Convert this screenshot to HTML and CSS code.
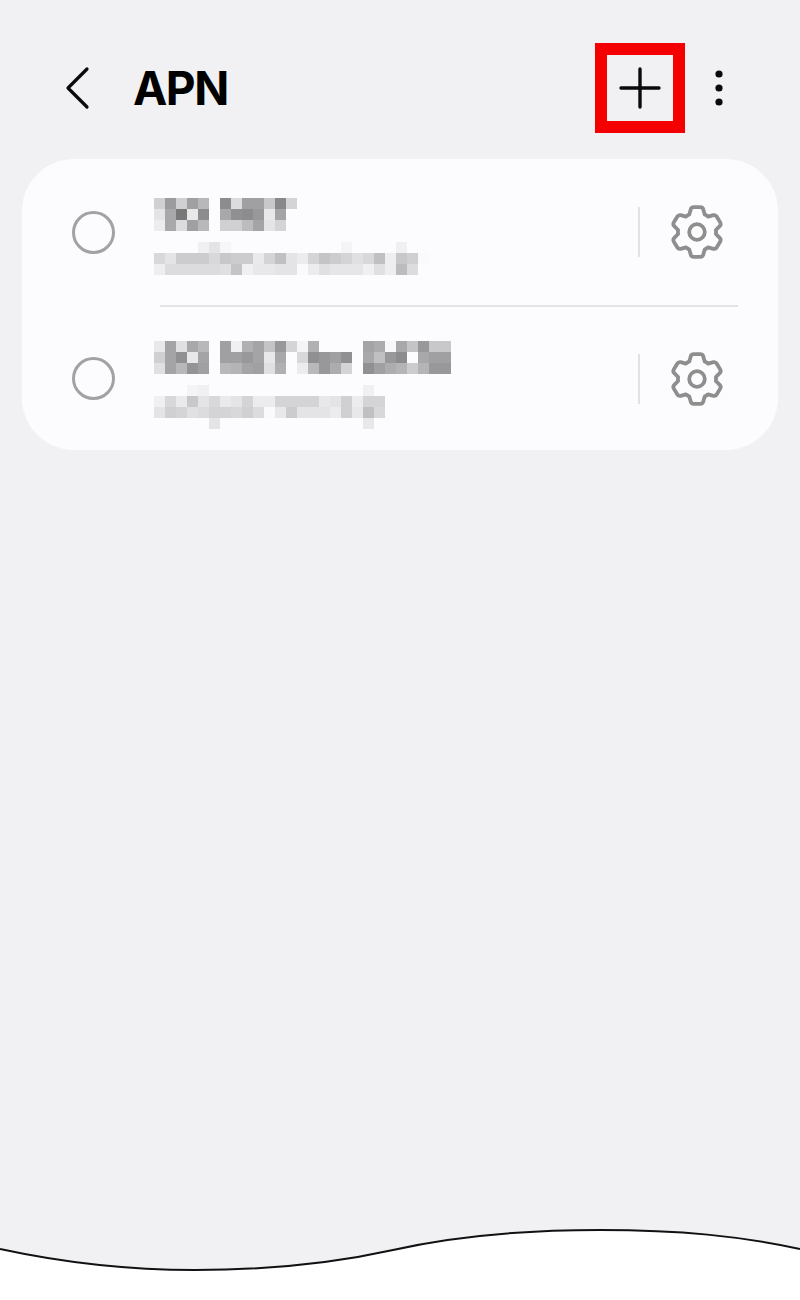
FILE: index.html
```html
<!DOCTYPE html>
<html lang="en">
<head>
<meta charset="utf-8">
<title>APN</title>
<link rel="stylesheet" href="styles.css">
</head>
<body>
<svg class="defs" width="0" height="0" aria-hidden="true">
  <symbol id="gear" viewBox="-27 -27 54 54">
    <path d="M-6.3-22.5Q-5.7-24.8-3.3-24.8H3.3Q5.7-24.8 6.3-22.5L7.7-17.4Q9.5-16.6 11.2-15.4L16.3-16.8Q18.6-17.4 19.8-15.3L23.2-9.6Q24.4-7.5 22.7-5.8L18.9-2Q19.2 0 18.9 2L22.7 5.8Q24.4 7.5 23.2 9.6L19.8 15.3Q18.6 17.4 16.3 16.8L11.2 15.4Q9.5 16.6 7.7 17.4L6.3 22.5Q5.7 24.8 3.3 24.8H-3.3Q-5.7 24.8-6.3 22.5L-7.7 17.4Q-9.5 16.6-11.2 15.4L-16.3 16.8Q-18.6 17.4-19.8 15.3L-23.2 9.6Q-24.4 7.5-22.7 5.8L-18.9 2Q-19.2 0-18.9-2L-22.7-5.8Q-24.4-7.5-23.2-9.6L-19.8-15.3Q-18.6-17.4-16.3-16.8L-11.2-15.4Q-9.5-16.6-7.7-17.4Z"/>
    <circle cx="0" cy="0" r="7.8"/>
  </symbol>
</svg>

<header class="topbar">
  <svg class="back" viewBox="0 0 30 44" aria-hidden="true"><path d="M27 3 8 22 27 41"/></svg>
  <h1 class="title">APN</h1>
  <div class="add-box">
    <svg class="plus" viewBox="0 0 44 44" aria-hidden="true"><path d="M3 22H41M22 3V41"/></svg>
  </div>
  <svg class="more" viewBox="0 0 20 36" aria-hidden="true"><circle cx="10" cy="4" r="3.6"/><circle cx="10" cy="18" r="3.6"/><circle cx="10" cy="32" r="3.6"/></svg>
</header>

<main class="content">
  <section class="card">
    <div class="row row-first">
      <span class="radio"></span>
      <div class="names">
        <!-- obscured network name -->
        <svg class="mosaic w13 h3" viewBox="0 0 13 3" aria-hidden="true">
          <rect x="0" y="0" width="1" height="1" fill="#d0d0d2"/><rect x="1" y="0" width="1" height="1" fill="#9c9c9e"/><rect x="2" y="0" width="1" height="1" fill="#d0d0d2"/><rect x="3" y="0" width="1" height="1" fill="#a0a0a2"/><rect x="4" y="0" width="1" height="1" fill="#b8b8ba"/><rect x="6" y="0" width="1" height="1" fill="#8c8c8e"/><rect x="7" y="0" width="1" height="1" fill="#dcdcde"/><rect x="8" y="0" width="1" height="1" fill="#a0a0a2"/><rect x="9" y="0" width="1" height="1" fill="#a0a0a2"/><rect x="10" y="0" width="1" height="1" fill="#c8c8ca"/><rect x="11" y="0" width="1" height="1" fill="#88888a"/><rect x="12" y="0" width="1" height="1" fill="#d4d4d6"/>
          <rect x="0" y="1" width="1" height="1" fill="#e4e4e6"/><rect x="1" y="1" width="1" height="1" fill="#a8a8aa"/><rect x="2" y="1" width="1" height="1" fill="#787878"/><rect x="3" y="1" width="1" height="1" fill="#e8e8ea"/><rect x="4" y="1" width="1" height="1" fill="#8c8c8e"/><rect x="6" y="1" width="1" height="1" fill="#a8a8aa"/><rect x="7" y="1" width="1" height="1" fill="#909092"/><rect x="8" y="1" width="1" height="1" fill="#8c8c8e"/><rect x="9" y="1" width="1" height="1" fill="#98989a"/><rect x="10" y="1" width="1" height="1" fill="#e8e8ea"/><rect x="11" y="1" width="1" height="1" fill="#a4a4a6"/>
          <rect x="0" y="2" width="1" height="1" fill="#ececee"/><rect x="1" y="2" width="1" height="1" fill="#a8a8aa"/><rect x="2" y="2" width="1" height="1" fill="#dcdcde"/><rect x="3" y="2" width="1" height="1" fill="#a0a0a2"/><rect x="4" y="2" width="1" height="1" fill="#b8b8ba"/><rect x="6" y="2" width="1" height="1" fill="#d0d0d2"/><rect x="7" y="2" width="1" height="1" fill="#d0d0d2"/><rect x="8" y="2" width="1" height="1" fill="#bcbcbe"/><rect x="9" y="2" width="1" height="1" fill="#a4a4a6"/><rect x="10" y="2" width="1" height="1" fill="#e4e4e6"/><rect x="11" y="2" width="1" height="1" fill="#d4d4d6"/>
        </svg>
        <!-- obscured access point address -->
        <svg class="mosaic w25 h3" viewBox="0 0 25 3" aria-hidden="true">
          <rect x="4" y="0" width="1" height="1" fill="#f0f0f2"/><rect x="5" y="0" width="1" height="1" fill="#e4e4e6"/><rect x="6" y="0" width="1" height="1" fill="#f6f6f8"/><rect x="17" y="0" width="1" height="1" fill="#f4f4f6"/><rect x="22" y="0" width="1" height="1" fill="#f0f0f2"/>
          <rect x="0" y="1" width="1" height="1" fill="#d8d8da"/><rect x="1" y="1" width="1" height="1" fill="#e4e4e6"/><rect x="2" y="1" width="1" height="1" fill="#cccccf"/><rect x="3" y="1" width="1" height="1" fill="#cccccf"/><rect x="4" y="1" width="1" height="1" fill="#cccccf"/><rect x="5" y="1" width="1" height="1" fill="#d8d8da"/><rect x="6" y="1" width="1" height="1" fill="#c8c8ca"/><rect x="7" y="1" width="1" height="1" fill="#cccccf"/><rect x="8" y="1" width="1" height="1" fill="#cccccf"/><rect x="9" y="1" width="1" height="1" fill="#eaeaec"/><rect x="10" y="1" width="1" height="1" fill="#d4d4d6"/><rect x="11" y="1" width="1" height="1" fill="#c0c0c2"/><rect x="12" y="1" width="1" height="1" fill="#e4e4e6"/><rect x="13" y="1" width="1" height="1" fill="#ececee"/><rect x="14" y="1" width="1" height="1" fill="#d4d4d6"/><rect x="15" y="1" width="1" height="1" fill="#c4c4c6"/><rect x="16" y="1" width="1" height="1" fill="#cccccf"/><rect x="17" y="1" width="1" height="1" fill="#d4d4d6"/><rect x="18" y="1" width="1" height="1" fill="#e0e0e2"/><rect x="19" y="1" width="1" height="1" fill="#d8d8da"/><rect x="20" y="1" width="1" height="1" fill="#c0c0c2"/><rect x="21" y="1" width="1" height="1" fill="#eeeef0"/><rect x="22" y="1" width="1" height="1" fill="#c8c8ca"/><rect x="23" y="1" width="1" height="1" fill="#d0d0d2"/><rect x="24" y="1" width="1" height="1" fill="#fafafc"/>
          <rect x="0" y="2" width="1" height="1" fill="#eeeef0"/><rect x="1" y="2" width="1" height="1" fill="#dcdcde"/><rect x="2" y="2" width="1" height="1" fill="#dcdcde"/><rect x="3" y="2" width="1" height="1" fill="#dcdcde"/><rect x="4" y="2" width="1" height="1" fill="#dcdcde"/><rect x="5" y="2" width="1" height="1" fill="#dcdcde"/><rect x="6" y="2" width="1" height="1" fill="#e0e0e2"/><rect x="7" y="2" width="1" height="1" fill="#c4c4c6"/><rect x="8" y="2" width="1" height="1" fill="#f0f0f2"/><rect x="9" y="2" width="1" height="1" fill="#e8e8ea"/><rect x="10" y="2" width="1" height="1" fill="#e8e8ea"/><rect x="11" y="2" width="1" height="1" fill="#e4e4e6"/><rect x="12" y="2" width="1" height="1" fill="#e4e4e6"/><rect x="13" y="2" width="1" height="1" fill="#fafafc"/><rect x="14" y="2" width="1" height="1" fill="#ececee"/><rect x="15" y="2" width="1" height="1" fill="#e0e0e2"/><rect x="16" y="2" width="1" height="1" fill="#e6e6e8"/><rect x="17" y="2" width="1" height="1" fill="#e6e6e8"/><rect x="18" y="2" width="1" height="1" fill="#e6e6e8"/><rect x="19" y="2" width="1" height="1" fill="#f0f0f2"/><rect x="20" y="2" width="1" height="1" fill="#e0e0e2"/><rect x="21" y="2" width="1" height="1" fill="#eeeef0"/><rect x="22" y="2" width="1" height="1" fill="#bcbcbe"/><rect x="23" y="2" width="1" height="1" fill="#dcdcde"/>
        </svg>
      </div>
      <span class="rule"></span>
      <svg class="gear" aria-hidden="true"><use href="#gear"/></svg>
    </div>

    <div class="separator"></div>

    <div class="row row-second">
      <span class="radio"></span>
      <div class="names">
        <svg class="mosaic w27 h3" viewBox="0 0 27 3" aria-hidden="true">
          <rect x="0" y="0" width="1" height="1" fill="#e8e8ea"/><rect x="1" y="0" width="1" height="1" fill="#a4a4a6"/><rect x="2" y="0" width="1" height="1" fill="#e0e0e2"/><rect x="3" y="0" width="1" height="1" fill="#a8a8aa"/><rect x="4" y="0" width="1" height="1" fill="#b8b8ba"/><rect x="6" y="0" width="1" height="1" fill="#a0a0a2"/><rect x="7" y="0" width="1" height="1" fill="#f0f0f2"/><rect x="8" y="0" width="1" height="1" fill="#b0b0b2"/><rect x="9" y="0" width="1" height="1" fill="#a4a4a6"/><rect x="10" y="0" width="1" height="1" fill="#c4c4c6"/><rect x="11" y="0" width="1" height="1" fill="#98989a"/><rect x="12" y="0" width="1" height="1" fill="#d4d4d6"/><rect x="13" y="0" width="1" height="1" fill="#f4f4f6"/><rect x="14" y="0" width="1" height="1" fill="#b0b0b2"/><rect x="19" y="0" width="1" height="1" fill="#a4a4a6"/><rect x="20" y="0" width="1" height="1" fill="#acacae"/><rect x="21" y="0" width="1" height="1" fill="#f8f8fa"/><rect x="22" y="0" width="1" height="1" fill="#a8a8aa"/><rect x="23" y="0" width="1" height="1" fill="#c4c4c6"/><rect x="24" y="0" width="1" height="1" fill="#98989a"/><rect x="25" y="0" width="1" height="1" fill="#c8c8ca"/><rect x="26" y="0" width="1" height="1" fill="#c8c8ca"/>
          <rect x="0" y="1" width="1" height="1" fill="#d0d0d2"/><rect x="1" y="1" width="1" height="1" fill="#a4a4a6"/><rect x="2" y="1" width="1" height="1" fill="#909092"/><rect x="3" y="1" width="1" height="1" fill="#e8e8ea"/><rect x="4" y="1" width="1" height="1" fill="#a4a4a6"/><rect x="6" y="1" width="1" height="1" fill="#a0a0a2"/><rect x="7" y="1" width="1" height="1" fill="#a0a0a2"/><rect x="8" y="1" width="1" height="1" fill="#98989a"/><rect x="9" y="1" width="1" height="1" fill="#a4a4a6"/><rect x="10" y="1" width="1" height="1" fill="#e8e8ea"/><rect x="11" y="1" width="1" height="1" fill="#a8a8aa"/><rect x="13" y="1" width="1" height="1" fill="#d8d8da"/><rect x="14" y="1" width="1" height="1" fill="#909092"/><rect x="15" y="1" width="1" height="1" fill="#98989a"/><rect x="16" y="1" width="1" height="1" fill="#a0a0a2"/><rect x="17" y="1" width="1" height="1" fill="#909092"/><rect x="19" y="1" width="1" height="1" fill="#a8a8aa"/><rect x="20" y="1" width="1" height="1" fill="#c0c0c2"/><rect x="21" y="1" width="1" height="1" fill="#98989a"/><rect x="22" y="1" width="1" height="1" fill="#8c8c8e"/><rect x="24" y="1" width="1" height="1" fill="#a8a8aa"/><rect x="25" y="1" width="1" height="1" fill="#a0a0a2"/><rect x="26" y="1" width="1" height="1" fill="#a0a0a2"/>
          <rect x="0" y="2" width="1" height="1" fill="#e0e0e2"/><rect x="1" y="2" width="1" height="1" fill="#a4a4a6"/><rect x="2" y="2" width="1" height="1" fill="#b8b8ba"/><rect x="3" y="2" width="1" height="1" fill="#949496"/><rect x="4" y="2" width="1" height="1" fill="#a0a0a2"/><rect x="6" y="2" width="1" height="1" fill="#b8b8ba"/><rect x="7" y="2" width="1" height="1" fill="#b4b4b6"/><rect x="8" y="2" width="1" height="1" fill="#a4a4a6"/><rect x="9" y="2" width="1" height="1" fill="#a0a0a2"/><rect x="10" y="2" width="1" height="1" fill="#e0e0e2"/><rect x="11" y="2" width="1" height="1" fill="#b0b0b2"/><rect x="13" y="2" width="1" height="1" fill="#ececee"/><rect x="14" y="2" width="1" height="1" fill="#b8b8ba"/><rect x="15" y="2" width="1" height="1" fill="#98989a"/><rect x="16" y="2" width="1" height="1" fill="#acacae"/><rect x="17" y="2" width="1" height="1" fill="#d4d4d6"/><rect x="19" y="2" width="1" height="1" fill="#909092"/><rect x="20" y="2" width="1" height="1" fill="#a0a0a2"/><rect x="21" y="2" width="1" height="1" fill="#acacae"/><rect x="22" y="2" width="1" height="1" fill="#b4b4b6"/><rect x="23" y="2" width="1" height="1" fill="#cccccf"/><rect x="24" y="2" width="1" height="1" fill="#b4b4b6"/><rect x="25" y="2" width="1" height="1" fill="#98989a"/><rect x="26" y="2" width="1" height="1" fill="#98989a"/>
        </svg>
        <svg class="mosaic w21 h4" viewBox="0 0 21 4" aria-hidden="true">
          <rect x="3" y="0" width="1" height="1" fill="#f4f4f6"/><rect x="4" y="0" width="1" height="1" fill="#f0f0f2"/><rect x="19" y="0" width="1" height="1" fill="#f0f0f2"/>
          <rect x="0" y="1" width="1" height="1" fill="#f0f0f2"/><rect x="1" y="1" width="1" height="1" fill="#d8d8da"/><rect x="2" y="1" width="1" height="1" fill="#eaeaec"/><rect x="3" y="1" width="1" height="1" fill="#c8c8ca"/><rect x="4" y="1" width="1" height="1" fill="#e4e4e6"/><rect x="5" y="1" width="1" height="1" fill="#d8d8da"/><rect x="6" y="1" width="1" height="1" fill="#eaeaec"/><rect x="7" y="1" width="1" height="1" fill="#e4e4e6"/><rect x="8" y="1" width="1" height="1" fill="#d4d4d6"/><rect x="9" y="1" width="1" height="1" fill="#ececee"/><rect x="10" y="1" width="1" height="1" fill="#ececee"/><rect x="11" y="1" width="1" height="1" fill="#d4d4d6"/><rect x="12" y="1" width="1" height="1" fill="#d4d4d6"/><rect x="13" y="1" width="1" height="1" fill="#d4d4d6"/><rect x="14" y="1" width="1" height="1" fill="#d4d4d6"/><rect x="15" y="1" width="1" height="1" fill="#e8e8ea"/><rect x="16" y="1" width="1" height="1" fill="#e4e4e6"/><rect x="17" y="1" width="1" height="1" fill="#d0d0d2"/><rect x="18" y="1" width="1" height="1" fill="#ececee"/><rect x="19" y="1" width="1" height="1" fill="#d4d4d6"/><rect x="20" y="1" width="1" height="1" fill="#d4d4d6"/>
          <rect x="0" y="2" width="1" height="1" fill="#e4e4e6"/><rect x="1" y="2" width="1" height="1" fill="#d0d0d2"/><rect x="2" y="2" width="1" height="1" fill="#d4d4d6"/><rect x="3" y="2" width="1" height="1" fill="#e0e0e2"/><rect x="4" y="2" width="1" height="1" fill="#dcdcde"/><rect x="5" y="2" width="1" height="1" fill="#d4d4d6"/><rect x="6" y="2" width="1" height="1" fill="#d4d4d6"/><rect x="7" y="2" width="1" height="1" fill="#d8d8da"/><rect x="8" y="2" width="1" height="1" fill="#d0d0d2"/><rect x="9" y="2" width="1" height="1" fill="#dcdcde"/><rect x="10" y="2" width="1" height="1" fill="#fafafc"/><rect x="11" y="2" width="1" height="1" fill="#e8e8ea"/><rect x="12" y="2" width="1" height="1" fill="#cccccf"/><rect x="13" y="2" width="1" height="1" fill="#e4e4e6"/><rect x="14" y="2" width="1" height="1" fill="#e4e4e6"/><rect x="15" y="2" width="1" height="1" fill="#e4e4e6"/><rect x="16" y="2" width="1" height="1" fill="#ececee"/><rect x="17" y="2" width="1" height="1" fill="#d0d0d2"/><rect x="18" y="2" width="1" height="1" fill="#e8e8ea"/><rect x="19" y="2" width="1" height="1" fill="#c0c0c2"/><rect x="20" y="2" width="1" height="1" fill="#d8d8da"/>
          <rect x="5" y="3" width="1" height="1" fill="#e4e4e6"/><rect x="19" y="3" width="1" height="1" fill="#e8e8ea"/>
        </svg>
      </div>
      <span class="rule"></span>
      <svg class="gear" aria-hidden="true"><use href="#gear"/></svg>
    </div>
  </section>
</main>

<footer class="wave">
  <svg viewBox="0 0 800 80" aria-hidden="true">
    <path class="wave-fill" d="M0 19C60 32 120 40 195 40 270 40 330 34 393 20 455 6 520 0 600 0 680 0 740 6 800 19V80H0Z"/>
    <path class="wave-line" d="M0 19C60 32 120 40 195 40 270 40 330 34 393 20 455 6 520 0 600 0 680 0 740 6 800 19"/>
  </svg>
</footer>
</body>
</html>
```
FILE: styles.css
```css
html, body {
  margin: 0;
  height: 100%;
}

body {
  display: flex;
  flex-direction: column;
  overflow: hidden;
  background: #f1f1f3;
  color: #000;
  font-family: Inter, "Liberation Sans", sans-serif;
}

.defs {
  display: none;
}

/* Top bar */
.topbar {
  display: flex;
  align-items: center;
  height: 90px;
  margin-top: 43px;
  padding: 0 71px 0 60px;
}

.back {
  width: 30px;
  height: 44px;
  fill: none;
  stroke: #0a0a0a;
  stroke-width: 3.2;
  stroke-linecap: round;
  stroke-linejoin: round;
}

.title {
  flex: 1;
  margin: 0 0 0 43px;
  font-size: 46px;
  font-weight: 700;
  letter-spacing: -1.5px;
  line-height: 1;
}

.add-box {
  display: flex;
  align-items: center;
  justify-content: center;
  box-sizing: border-box;
  width: 90px;
  height: 90px;
  border: 12px solid #f40000;
}

.plus {
  width: 44px;
  height: 44px;
  fill: none;
  stroke: #0a0a0a;
  stroke-width: 3.4;
  stroke-linecap: round;
}

.more {
  width: 20px;
  height: 36px;
  margin-left: 24px;
  fill: #0a0a0a;
}

/* APN list */
.content {
  flex: 1;
  padding: 26px 22px 0;
}

.card {
  height: 291px;
  border-radius: 52px;
  background: #fcfcfe;
}

.row {
  display: flex;
  align-items: center;
  padding: 0 54px 0 50px;
}

.row-first {
  height: 146px;
}

.row-second {
  height: 143px;
}

.radio {
  flex: none;
  box-sizing: border-box;
  width: 43px;
  height: 43px;
  border: 3.5px solid #a2a2a2;
  border-radius: 50%;
}

.names {
  display: flex;
  flex: 1;
  flex-direction: column;
  align-self: flex-start;
  align-items: flex-start;
  gap: 11px;
  margin-left: 39px;
}

.row-first .names {
  padding-top: 39px;
}

.row-second .names {
  padding-top: 34px;
}

/* Pixelated names keep the slightly soft edge of a scaled-down mosaic */
.mosaic {
  display: block;
  shape-rendering: crispEdges;
  filter: blur(0.7px);
}

.w13 { width: 143px; }
.w21 { width: 231px; }
.w25 { width: 275px; }
.w27 { width: 297px; }
.h3 { height: 33px; }
.h4 { height: 44px; }

.rule {
  flex: none;
  width: 2px;
  height: 50px;
  background: #e2e2e3;
}

.gear {
  flex: none;
  width: 54px;
  height: 54px;
  margin-left: 30px;
  fill: none;
  stroke: #8e8e8e;
  stroke-width: 3.8;
  stroke-linejoin: round;
}

.separator {
  height: 2px;
  margin: 0 40px 0 138px;
  background: #e4e4e5;
}

/* Torn lower edge of the screen */
.wave {
  flex: none;
  height: 70px;
}

.wave svg {
  display: block;
  width: 800px;
  height: 80px;
  overflow: visible;
}

.wave-fill {
  fill: #fff;
}

.wave-line {
  fill: none;
  stroke: #111;
  stroke-width: 2;
}
```
